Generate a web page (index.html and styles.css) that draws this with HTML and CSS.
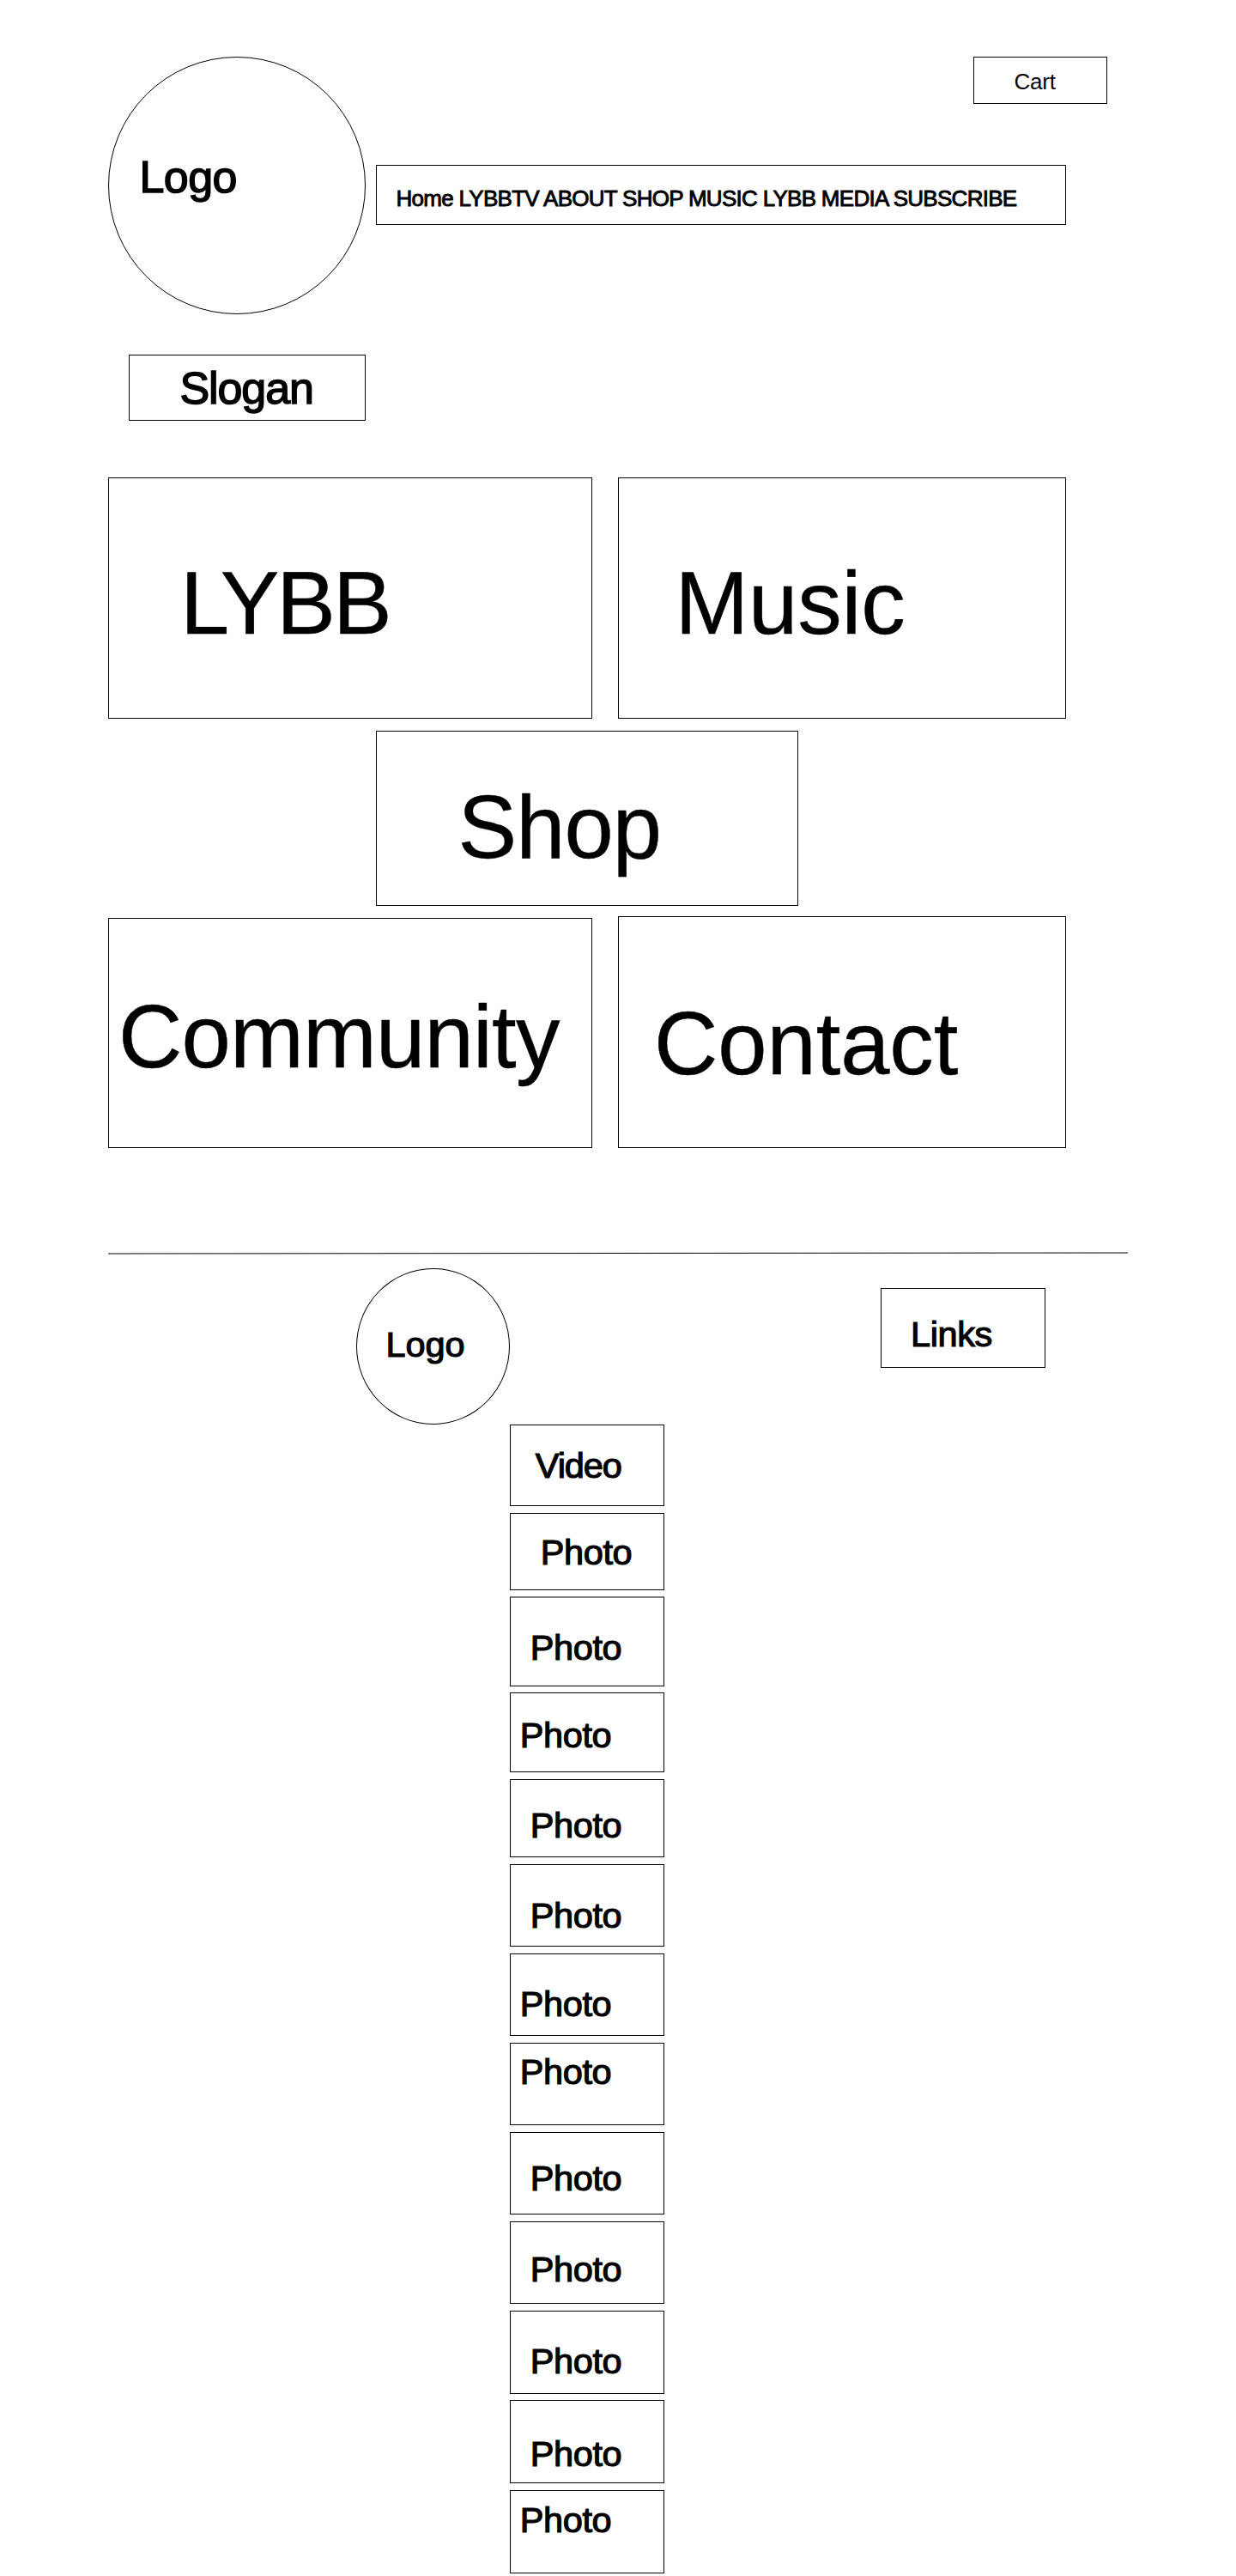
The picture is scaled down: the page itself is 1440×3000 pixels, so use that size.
FILE: index.html
```html
<!DOCTYPE html>
<html lang="en">
<head>
<meta charset="utf-8">
<title>LYBB</title>
<link rel="stylesheet" href="styles.css">
</head>
<body>
<div class="page">
  <header class="header">
    <div class="logo">Logo</div>
    <div class="header-side">
      <div class="box cart">Cart</div>
      <nav class="box nav"><a>Home</a> <a>LYBBTV</a> <a>ABOUT</a> <a>SHOP</a> <a>MUSIC</a> <a>LYBB</a> <a>MEDIA</a> <a>SUBSCRIBE</a></nav>
    </div>
  </header>
  <div class="box slogan">Slogan</div>
  <main class="tiles">
    <div class="tile-row">
      <section class="box tile tile-lybb">LYBB</section>
      <section class="box tile tile-music">Music</section>
    </div>
    <section class="box tile tile-shop">Shop</section>
    <div class="tile-row">
      <section class="box tile tile-community">Community</section>
      <section class="box tile tile-contact">Contact</section>
    </div>
  </main>
  <svg class="divider" width="1188" height="4" viewBox="0 0 1188 4"><line x1="0" y1="3" x2="1188" y2="2" stroke="#000" stroke-width="1"/></svg>
  <footer>
    <div class="footer-top">
      <div class="logo logo-small">Logo</div>
      <div class="box links">Links</div>
    </div>
    <div class="media">
      <div class="box item video">Video</div>
      <div class="box item p1">Photo</div>
      <div class="box item p2">Photo</div>
      <div class="box item p3 near">Photo</div>
      <div class="box item p4">Photo</div>
      <div class="box item p5">Photo</div>
      <div class="box item p6 near">Photo</div>
      <div class="box item p7 near">Photo</div>
      <div class="box item p8">Photo</div>
      <div class="box item p9">Photo</div>
      <div class="box item p10">Photo</div>
      <div class="box item p11">Photo</div>
      <div class="box item p12 near">Photo</div>
    </div>
  </footer>
</div>
</body>
</html>
```
FILE: styles.css
```css
* { box-sizing: border-box; }
body {
  margin: 0;
  background: #fff;
  color: #000;
  font-family: "Liberation Sans", Arial, sans-serif;
  line-height: 1;
}
.page { width: 1440px; height: 3000px; padding: 66px 126px 0; overflow: hidden; }
.box { border: 1px solid #000; white-space: nowrap; }

.header { display: flex; gap: 12px; }
.logo {
  width: 300px;
  height: 300px;
  flex: none;
  border: 1px solid #000;
  border-radius: 50%;
  padding: 112.5px 0 0 35.5px;
  font-size: 52px;
  letter-spacing: -0.6px;
  -webkit-text-stroke: 1.5px #000;
}
.header-side { width: 852px; display: flex; flex-direction: column; }
.cart { align-self: flex-end; width: 156px; height: 55px; padding: 15px 0 0 46.4px; font-size: 26px; letter-spacing: -0.2px; }
.nav {
  width: 804px;
  height: 70px;
  margin-top: 71px;
  padding: 25px 0 0 22.5px;
  font-size: 26px;
  letter-spacing: -0.72px;
  -webkit-text-stroke: 0.9px #000;
}
.slogan {
  width: 276px;
  height: 77px;
  margin: 47px 0 0 24px;
  padding: 12px 0 0 58.5px;
  font-size: 52px;
  letter-spacing: -1.1px;
  -webkit-text-stroke: 1.5px #000;
}

.tiles { margin-top: 66px; }
.tile-row { display: flex; align-items: flex-end; gap: 30px; }
.tile { font-size: 103px; -webkit-text-stroke: 0.4px #000; }
.tile-lybb { width: 564px; height: 281px; padding: 94px 0 0 83px; letter-spacing: -3px; }
.tile-music { width: 522px; height: 281px; padding: 94px 0 0 65.5px; letter-spacing: -0.2px; }
.tile-shop { width: 492px; height: 204px; margin: 14px 0 12px 312px; padding: 60px 0 0 94.5px; letter-spacing: -1px; }
.tile-community { width: 564px; height: 268px; padding: 86px 0 0 11px; letter-spacing: -0.8px; }
.tile-contact { width: 522px; height: 270px; padding: 96px 0 0 41px; letter-spacing: -0.1px; }

.divider { display: block; margin-top: 120px; }

.footer-top { display: flex; margin-top: 16px; padding: 0 96px 0 289px; justify-content: space-between; font-size: 41.5px; -webkit-text-stroke: 1.2px #000; }
.logo-small { width: 179px; height: 182px; padding: 67px 0 0 33.6px; font-size: 41.5px; letter-spacing: -0.1px; -webkit-text-stroke: 1.2px #000; }
.links { width: 192px; height: 93px; margin-top: 23px; padding: 32px 0 0 34px; letter-spacing: -0.4px; }

.media { width: 180px; margin-left: 468px; font-size: 41.5px; letter-spacing: -0.4px; -webkit-text-stroke: 1.2px #000; }
.item { height: 96px; margin-bottom: 8px; padding-left: 22.8px; }
.video { height: 95px; padding: 26px 0 0 28.8px; letter-spacing: -1.1px; }
.near { padding-left: 10.8px; }
.p1 { height: 90px; margin-bottom: 7px; padding: 24px 0 0 34.8px; }
/* The second photo frame has a soft two-pixel top edge. */
.p2 { height: 105px; margin-bottom: 7px; padding-top: 37px; border-top: 2px solid #808080; }
.p3 { height: 93px; padding-top: 28px; }
.p4 { height: 91px; padding-top: 32px; }
.p5 { padding-top: 38px; }
.p6 { padding-top: 37px; }
.p7 { padding-top: 12px; }
.p8 { padding-top: 32px; }
.p9 { padding-top: 34px; }
.p10 { height: 97px; margin-bottom: 7px; padding-top: 37px; }
.p11 { height: 97px; padding-top: 41px; }
.p12 { height: 97px; margin-bottom: 0; padding-top: 13px; }
```
